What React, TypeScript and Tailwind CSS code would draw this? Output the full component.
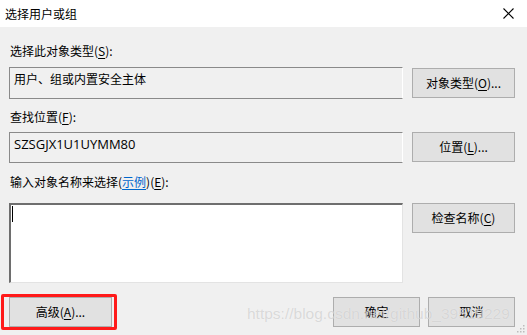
import React from "react";

const font = { fontFamily: '"Noto Sans CJK SC", "Noto Sans", sans-serif' };

function U({ children }: { children: React.ReactNode }) {
  return <span className="underline underline-offset-2">{children}</span>;
}

function Btn({ children, className = "" }: { children: React.ReactNode; className?: string }) {
  return (
    <div
      className={`flex items-center justify-center bg-[#e1e1e1] border border-[#adadad] text-[12px] text-[#000] ${className}`}
    >
      {children}
    </div>
  );
}

export default function App() {
  return (
    <div className="relative w-[527px] h-[335px] bg-[#f0f0f0] overflow-hidden text-[12px] leading-[16px] text-black" style={font}>
      <div className="h-[27px] bg-white flex items-center justify-between pl-[5px] pr-[13px]">
        <span className="text-[12px]">选择用户或组</span>
        <svg width="11" height="11" viewBox="0 0 11 11">
          <path d="M0.5 0.5 L10.5 10.5 M10.5 0.5 L0.5 10.5" stroke="#000" strokeWidth="1.1" />
        </svg>
      </div>

      <div className="flex flex-col pl-[9px] pr-[12px]">
        <div className="mt-[16px] pl-[1px]">
          选择此对象类型(<U>S</U>):
        </div>
        <div className="flex mt-[8px] gap-[9px] items-start">
          <div className="w-[394px] h-[32px] border border-[#8a8a8a] border-r-white bg-[#f0f0f0] pl-[4px] pt-[3px]">
            用户、组或内置安全主体
          </div>
          <Btn className="w-[103px] h-[30px] mt-[1px]">
            对象类型(<U>O</U>)...
          </Btn>
        </div>

        <div className="mt-[10px] pl-[1px]">
          查找位置(<U>F</U>):
        </div>
        <div className="flex mt-[7px] gap-[9px] items-start">
          <div
            className="w-[394px] h-[31px] border border-[#8a8a8a] border-r-white bg-[#f0f0f0] pl-[4px] pt-[3px] text-[13px]"
            style={{ fontFamily: '"Open Sans", "Noto Sans", sans-serif' }}
          >
            SZSGJX1U1UYMM80
          </div>
          <Btn className="w-[103px] h-[30px]">
            位置(<U>L</U>)...
          </Btn>
        </div>

        <div className="mt-[11px] pl-[1px]">
          输入对象名称来选择(<span className="text-[#0066cc] underline underline-offset-2">示例</span>)(<U>E</U>):
        </div>
        <div className="flex mt-[13px] gap-[9px] items-start">
          <div className="w-[394px] h-[80px] border-t-2 border-l-2 border-[#6e6e6e] border-r border-b border-r-[#e3e3e3] border-b-[#e3e3e3] bg-white pl-[1px] pt-[1px]">
            <div className="w-[1px] h-[16px] bg-black" />
          </div>
          <Btn className="w-[103px] h-[30px]">
            检查名称(<U>C</U>)
          </Btn>
        </div>

        <div className="flex mt-[14px] items-start">
          <Btn className="w-[103px] h-[30px]">
            高级(<U>A</U>)...
          </Btn>
          <div className="flex-1" />
          <Btn className="w-[87px] h-[30px]">确定</Btn>
          <Btn className="w-[87px] h-[30px] ml-[8px]">取消</Btn>
        </div>
      </div>

      <div className="absolute left-[1px] top-[294px] w-[116px] h-[36px] border-[3px] border-[#ff1a1a] rounded-[2px]" />

      <div
        className="absolute left-[247px] top-[305px] text-[15.5px] leading-[18px] text-[rgba(190,190,190,0.55)] whitespace-nowrap"
        style={{ fontFamily: '"Liberation Sans", Arial, sans-serif', textShadow: "0 0 1px rgba(255,255,255,0.7)" }}
      >
        https://blog.csdn.net/github_39519229
      </div>

      <svg className="absolute right-[2px] bottom-[2px]" width="8" height="8" viewBox="0 0 8 8">
        <rect x="6" y="0" width="1.5" height="1.5" fill="#bcbcbc" />
        <rect x="3" y="3" width="1.5" height="1.5" fill="#bcbcbc" />
        <rect x="6" y="3" width="1.5" height="1.5" fill="#bcbcbc" />
        <rect x="0" y="6" width="1.5" height="1.5" fill="#bcbcbc" />
        <rect x="3" y="6" width="1.5" height="1.5" fill="#bcbcbc" />
        <rect x="6" y="6" width="1.5" height="1.5" fill="#bcbcbc" />
      </svg>
    </div>
  );
}
